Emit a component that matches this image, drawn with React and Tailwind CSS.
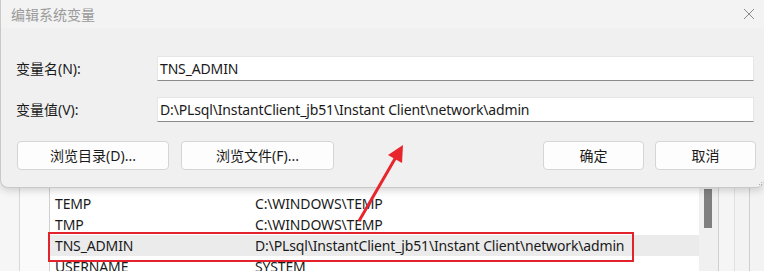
import React from 'react';

const font = { fontFamily: '"Noto Sans", "Noto Sans CJK SC", sans-serif' };

const rows = [
  { name: 'TEMP', value: 'C:\\WINDOWS\\TEMP' },
  { name: 'TMP', value: 'C:\\WINDOWS\\TEMP' },
  { name: 'TNS_ADMIN', value: 'D:\\PLsql\\InstantClient_jb51\\Instant Client\\network\\admin', selected: true },
  { name: 'USERNAME', value: 'SYSTEM' },
];

const Field = ({ label, value }) => (
  <div className="flex items-center h-[25px]">
    <div className="w-[156px] pl-[15px] text-[14px] text-[#1a1a1a]">{label}</div>
    <div className="flex-1 mr-[10px] h-[25px] bg-white border border-[#e6e6e6] border-b-[#8a8a8a] flex items-center pl-[2px] text-[14px] tracking-[-0.15px] text-[#1a1a1a]">
      {value}
    </div>
  </div>
);

const Button = ({ children, w }) => (
  <button className={`${w} h-[29px] bg-[#fdfdfd] border border-[#d5d5d5] rounded-[4px] text-[14px] text-[#1a1a1a]`}>
    {children}
  </button>
);

export default function App() {
  return (
    <div className="relative w-[764px] h-[271px] overflow-hidden bg-[#f7f7f7]" style={font}>
      {/* dialog */}
      <div className="relative z-10 h-[188px] bg-[#f0f0f0] border-l border-b border-[#c9c9c9] rounded-b-[8px] shadow-[0_2px_8px_rgba(0,0,0,0.18)]">
        <div className="h-[28px] bg-[#f3f3f3] flex items-center justify-between pl-[10px] pr-[8px]">
          <span className="text-[14px] text-[#9a9a9a]">编辑系统变量</span>
          <svg width="12" height="12" viewBox="0 0 12 12" className="mr-[1px]">
            <path d="M1 1 L11 11 M11 1 L1 11" stroke="#8a8a8a" strokeWidth="1" fill="none" />
          </svg>
        </div>
        <div className="pt-[28px] flex flex-col gap-[16px]">
          <Field label="变量名(N):" value="TNS_ADMIN" />
          <Field label="变量值(V):" value="D:\PLsql\InstantClient_jb51\Instant Client\network\admin" />
        </div>
        <div className="flex items-center mt-[19px] pl-[16px] pr-[8px]">
          <Button w="w-[152px]">浏览目录(D)...</Button>
          <div className="ml-[12px]">
            <Button w="w-[153px]">浏览文件(F)...</Button>
          </div>
          <div className="ml-auto flex gap-[11px]">
            <Button w="w-[101px]">确定</Button>
            <Button w="w-[101px]">取消</Button>
          </div>
        </div>
        <div className="absolute right-[2px] bottom-[2px] grid grid-cols-2 gap-[1px]">
          <span className="w-[1px] h-[1px]" />
          <span className="w-[1px] h-[1px] bg-[#aaa]" />
          <span className="w-[1px] h-[1px] bg-[#aaa]" />
          <span className="w-[1px] h-[1px] bg-[#aaa]" />
        </div>
      </div>

      {/* window behind */}
      <div className="flex h-[83px]">
        <div className="w-[20px] bg-[#f6f6f6] border-r border-[#d8d8d8]" />
        <div className="w-[30px] bg-[#fafafa] border-r border-[#cfcfcf]" />
        <div className="w-[649px] bg-white pt-[5px]">
          {rows.map((r) => (
            <div
              key={r.name}
              className={`flex items-center h-[21px] text-[14px] tracking-[-0.15px] text-[#1a1a1a] ${r.selected ? 'bg-[#ebebeb]' : ''}`}
            >
              <span className="w-[205px] pl-[5px]">{r.name}</span>
              <span>{r.value}</span>
            </div>
          ))}
        </div>
        <div className="w-[19px] bg-[#f0f0f0] pl-[5px] pt-[1px]">
          <div className="w-[8px] h-[39px] bg-[#7f7f7f]" />
        </div>
        <div className="w-[16px] bg-[#f5f5f5] border-l border-[#cfcfcf]" />
        <div className="w-[15px] bg-[#f3f3f3] border-l border-[#e0e0e0]" />
        <div className="flex-1 bg-[#f3f3f3] border-l border-[#cfcfcf]" />
      </div>

      {/* annotation */}
      <div className="absolute z-20 left-[48px] top-[232px] w-[586px] h-[30px] border-2 border-[#e3232b]" />
      <svg className="absolute z-20 left-0 top-0" width="764" height="271">
        <line x1="359" y1="221" x2="396" y2="157" stroke="#e8242c" strokeWidth="3" />
        <polygon points="403,145 402,163 388,155" fill="#e8242c" />
      </svg>
    </div>
  );
}
